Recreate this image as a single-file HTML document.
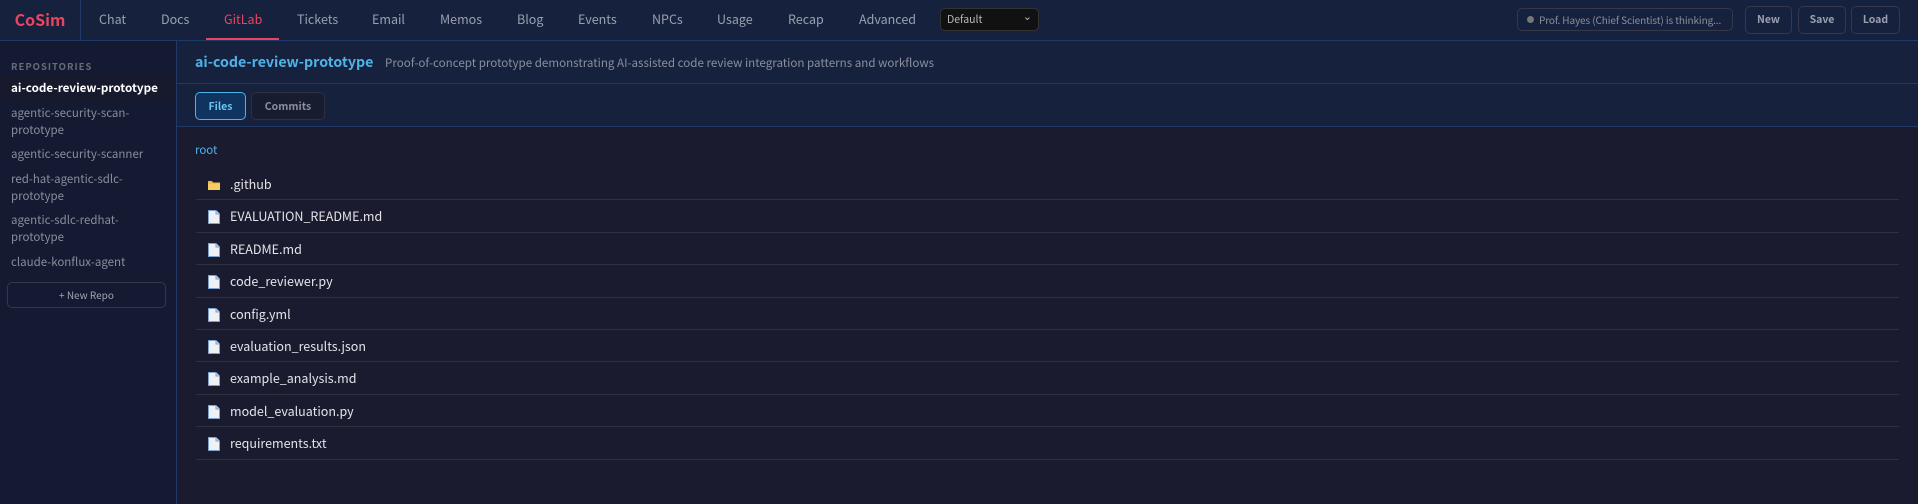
<!DOCTYPE html>
<html><head><meta charset="utf-8"><style>
*{box-sizing:border-box;margin:0;padding:0}
body{width:1918px;height:504px;overflow:hidden;background:#1a1b2e;font-family:"Noto Sans CJK JP","DejaVu Sans",sans-serif;color:#ddd;position:relative;white-space:nowrap}
.top{position:absolute;left:0;top:0;width:1918px;height:41px;background:#16213e;border-bottom:1px solid #1f3a66}
.logo{position:absolute;left:0;top:0;width:81px;height:40px;border-right:1px solid #1f3a66;color:#e94560;font-weight:700;font-size:16px;line-height:38px;text-align:center}
.nav{position:absolute;top:0;height:40px;line-height:38px;font-size:12.5px;color:#9aa0ae}
.nav.act{color:#e94560}
.ul{position:absolute;left:206px;top:38px;width:73px;height:2px;background:#e94560}
.sel{position:absolute;left:940px;top:8px;width:99px;height:23px;background:#111;border:1px solid #333;border-radius:5px;color:#bbb;font-size:10.5px;line-height:21px;padding-left:6px}
.sel:after{content:"⌄";position:absolute;right:6px;top:-3px;font-size:11px}
.pill{position:absolute;left:1517px;top:8px;width:216px;height:23px;border:1px solid #34384a;border-radius:5px;font-size:10px;color:#8a8f9c;line-height:21px;padding-left:21px;letter-spacing:-0.1px}
.pill:before{content:"";position:absolute;left:9px;top:7px;width:7px;height:7px;border-radius:50%;background:#777}
.btn{position:absolute;top:6px;height:28px;border:1px solid #34384a;border-radius:5px;font-size:10.5px;font-weight:600;color:#9aa0ae;line-height:26px;text-align:center}
.side{position:absolute;left:0;top:41px;width:177px;height:463px;background:#131a31;border-right:1px solid #1f3a66}
.sh{position:absolute;left:11px;top:18px;font-size:9.5px;letter-spacing:1px;color:#666c7a;font-weight:600}
.it{position:absolute;left:11px;font-size:11.5px;color:#888e9c;line-height:16.5px}
.itA{position:absolute;left:0;top:34px;width:176px;height:26px;background:#171a2d;color:#fff;font-weight:700;font-size:11.7px;line-height:26px;padding-left:11px}
.nr{position:absolute;left:7px;top:241px;width:159px;height:26px;border:1px solid #333848;border-radius:5px;font-size:10px;color:#a0a5b2;text-align:center;line-height:24px}
.hd{position:absolute;left:177px;top:41px;width:1741px;height:43px;background:#16213e;border-bottom:1px solid #1f3a66}
.tt{position:absolute;left:18px;top:0;line-height:43px;font-size:14.2px;font-weight:700;color:#4fb3e8}
.ds{position:absolute;left:208px;top:0;line-height:45px;font-size:11.6px;color:#8a8f9c}
.tb{position:absolute;left:177px;top:84px;width:1741px;height:43px;background:#16213e;border-bottom:1px solid #1f3a66}
.tab{position:absolute;top:8px;height:28px;border-radius:5px;font-size:10.5px;font-weight:600;line-height:28px;text-align:center}
.root{position:absolute;left:195px;top:142px;font-size:11.5px;color:#4fb3e8}
.row{position:absolute;left:196px;width:1703px;height:32.4px;border-bottom:1px solid #2e3140;font-size:12.5px;color:#e4e4ea;line-height:32px}
.row span{position:absolute;left:34px}
.ic{position:absolute;left:12px;top:10px;width:12px;height:14px}
</style></head><body>
<div class="top">
<div class="logo">CoSim</div>
<div class="nav" style="left:99px">Chat</div>
<div class="nav" style="left:161px">Docs</div>
<div class="nav act" style="left:224px">GitLab</div>
<div class="nav" style="left:297px">Tickets</div>
<div class="nav" style="left:372px">Email</div>
<div class="nav" style="left:440px">Memos</div>
<div class="nav" style="left:517px">Blog</div>
<div class="nav" style="left:578px">Events</div>
<div class="nav" style="left:652px">NPCs</div>
<div class="nav" style="left:717px">Usage</div>
<div class="nav" style="left:788px">Recap</div>
<div class="nav" style="left:859px">Advanced</div>
<div class="ul"></div>
<div class="sel">Default</div>
<div class="pill">Prof. Hayes (Chief Scientist) is thinking...</div>
<div class="btn" style="left:1745px;width:47px">New</div>
<div class="btn" style="left:1798px;width:48px">Save</div>
<div class="btn" style="left:1851px;width:49px">Load</div>
</div>
<div class="side">
<div class="sh">REPOSITORIES</div>
<div class="itA">ai-code-review-prototype</div>
<div class="it" style="top:64px">agentic-security-scan-<br>prototype</div>
<div class="it" style="top:105px">agentic-security-scanner</div>
<div class="it" style="top:130px">red-hat-agentic-sdlc-<br>prototype</div>
<div class="it" style="top:171px">agentic-sdlc-redhat-<br>prototype</div>
<div class="it" style="top:213px">claude-konflux-agent</div>
<div class="nr">+ New Repo</div>
</div>
<div class="hd"><div class="tt">ai-code-review-prototype</div><div class="ds">Proof-of-concept prototype demonstrating AI-assisted code review integration patterns and workflows</div></div>
<div class="tb">
<div class="tab" style="left:18px;width:51px;background:#0f3460;border:1px solid #4fb3e8;color:#6cc4f0">Files</div>
<div class="tab" style="left:74px;width:74px;border:1px solid #2e3140;color:#8a8f9c;background:#171c30">Commits</div>
</div>
<div class="root">root</div>
<div class="row" style="top:168px"><svg class="ic" viewBox="0 0 12 14"><path d="M0 3h4l1 1.5h7V12H0z" fill="#e8b84a"/><path d="M0 5.5h12V12H0z" fill="#f5cd62"/></svg><span>.github</span></div>
<div class="row" style="top:200.4px"><svg class="ic" viewBox="0 0 12 14"><path d="M0.5 0.5h7.5l3.5 3.5v9.5h-11z" fill="#eef1f6" stroke="#7da1d0"/><path d="M8 0.5v3.5h3.5" fill="#c8d6ea" stroke="#7da1d0"/></svg><span>EVALUATION_README.md</span></div>
<div class="row" style="top:232.8px"><svg class="ic" viewBox="0 0 12 14"><path d="M0.5 0.5h7.5l3.5 3.5v9.5h-11z" fill="#eef1f6" stroke="#7da1d0"/><path d="M8 0.5v3.5h3.5" fill="#c8d6ea" stroke="#7da1d0"/></svg><span>README.md</span></div>
<div class="row" style="top:265.2px"><svg class="ic" viewBox="0 0 12 14"><path d="M0.5 0.5h7.5l3.5 3.5v9.5h-11z" fill="#eef1f6" stroke="#7da1d0"/><path d="M8 0.5v3.5h3.5" fill="#c8d6ea" stroke="#7da1d0"/></svg><span>code_reviewer.py</span></div>
<div class="row" style="top:297.6px"><svg class="ic" viewBox="0 0 12 14"><path d="M0.5 0.5h7.5l3.5 3.5v9.5h-11z" fill="#eef1f6" stroke="#7da1d0"/><path d="M8 0.5v3.5h3.5" fill="#c8d6ea" stroke="#7da1d0"/></svg><span>config.yml</span></div>
<div class="row" style="top:330px"><svg class="ic" viewBox="0 0 12 14"><path d="M0.5 0.5h7.5l3.5 3.5v9.5h-11z" fill="#eef1f6" stroke="#7da1d0"/><path d="M8 0.5v3.5h3.5" fill="#c8d6ea" stroke="#7da1d0"/></svg><span>evaluation_results.json</span></div>
<div class="row" style="top:362.4px"><svg class="ic" viewBox="0 0 12 14"><path d="M0.5 0.5h7.5l3.5 3.5v9.5h-11z" fill="#eef1f6" stroke="#7da1d0"/><path d="M8 0.5v3.5h3.5" fill="#c8d6ea" stroke="#7da1d0"/></svg><span>example_analysis.md</span></div>
<div class="row" style="top:394.8px"><svg class="ic" viewBox="0 0 12 14"><path d="M0.5 0.5h7.5l3.5 3.5v9.5h-11z" fill="#eef1f6" stroke="#7da1d0"/><path d="M8 0.5v3.5h3.5" fill="#c8d6ea" stroke="#7da1d0"/></svg><span>model_evaluation.py</span></div>
<div class="row" style="top:427.2px"><svg class="ic" viewBox="0 0 12 14"><path d="M0.5 0.5h7.5l3.5 3.5v9.5h-11z" fill="#eef1f6" stroke="#7da1d0"/><path d="M8 0.5v3.5h3.5" fill="#c8d6ea" stroke="#7da1d0"/></svg><span>requirements.txt</span></div>
</body></html>
